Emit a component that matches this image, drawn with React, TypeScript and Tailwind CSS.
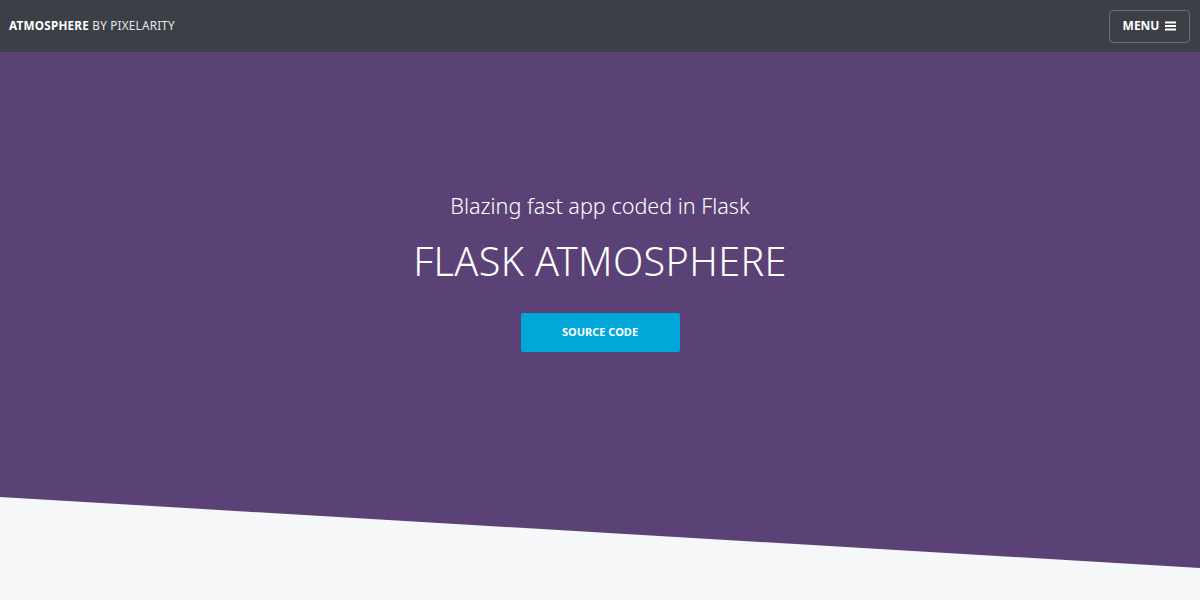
import React from "react";

export default function App() {
  return (
    <div className="relative w-full h-[600px] overflow-hidden bg-[#f5f7f8]" style={{ fontFamily: '"Noto Sans", "Open Sans", sans-serif' }}>
      <header className="h-[52px] bg-[#3b3f46] flex items-center justify-between pl-[9px] pr-[10px]">
        <div className="text-[11.7px] text-white tracking-[0.02em]">
          <span className="font-bold">ATMOSPHERE</span>{" "}
          <span className="font-normal text-[#e8e8ec]">BY PIXELARITY</span>
        </div>
        <button className="h-[33px] w-[81px] border border-[#6b6f75] rounded-[4px] flex items-center justify-center gap-[6px] text-white text-[12px] font-bold">
          MENU
          <svg width="11" height="10" viewBox="0 0 11 10" fill="white">
            <rect x="0" y="0.5" width="11" height="2" />
            <rect x="0" y="4" width="11" height="2" />
            <rect x="0" y="7.5" width="11" height="2" />
          </svg>
        </button>
      </header>
      <section className="h-[516px] bg-[#5a4277] [clip-path:polygon(0_0,100%_0,100%_100%,0_86.24%)] flex flex-col items-center pt-[140px]">
        <p className="text-white text-[21.6px] leading-[28px] font-light">Blazing fast app coded in Flask</p>
        <h1 className="text-white text-[39.5px] leading-[44px] font-light mt-[19px] tracking-[0.01em]">FLASK ATMOSPHERE</h1>
        <a className="mt-[30px] w-[159px] h-[39px] bg-[#00a8da] rounded-[2px] flex items-center justify-center text-white text-[11px] font-bold">
          SOURCE CODE
        </a>
      </section>
    </div>
  );
}
